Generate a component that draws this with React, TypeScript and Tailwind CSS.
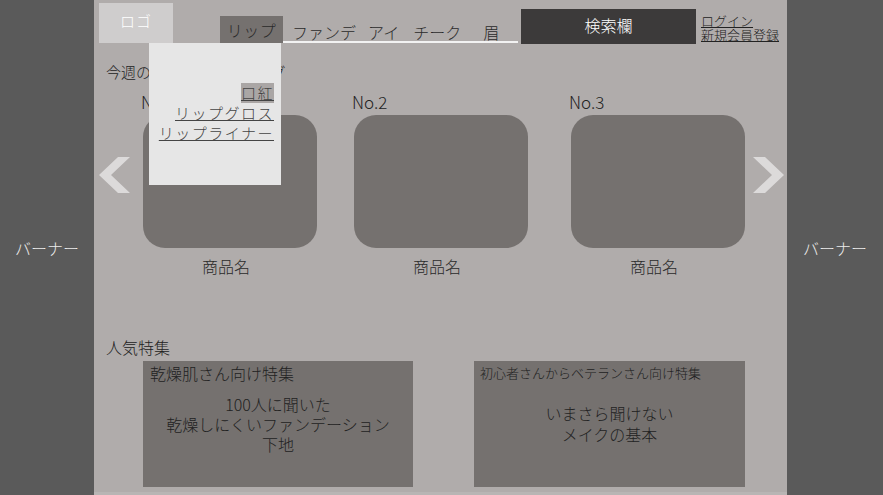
import React from "react";

const Arrow = ({ dir }: { dir: "left" | "right" }) => (
  <svg width="32" height="36" viewBox="0 0 32 36" className="block">
    {dir === "left" ? (
      <polygon points="19,0 31,0 12,18 31,36 19,36 0,18" fill="#dcdada" />
    ) : (
      <polygon points="1,0 13,0 32,18 13,36 1,36 20,18" fill="#dcdada" />
    )}
  </svg>
);

const Product = ({ no, className }: { no: string; className?: string }) => (
  <div className={`flex w-[176px] flex-col ${className ?? ""}`}>
    <div className="h-[20px] text-[17px] leading-[20px] text-[#222]">{no}</div>
    <div className="ml-[2px] mt-[3px] h-[133px] w-[174px] rounded-[22px] bg-[#75716f]" />
    <div className="-ml-[2px] mt-[8px] w-[174px] text-center text-[16px] leading-[20px] text-[#2a2a2a]">
      商品名
    </div>
  </div>
);

export default function App() {
  return (
    <div className="flex h-[495px] w-[883px] overflow-hidden font-light font-['Noto_Sans_CJK_JP','Noto_Sans',sans-serif]">
      <aside className="flex h-full w-[94px] items-center justify-center bg-[#5a5a5a] text-[16px] text-[#ececec]">
        バーナー
      </aside>

      <main className="relative flex h-full w-[693px] flex-col border-b-[3px] border-[#b8b5b4] bg-[#b0acab]">
        {/* header */}
        <header className="flex h-[45px] items-start">
          <div className="ml-[5px] mt-[3px] flex h-[40px] w-[74px] items-center justify-center bg-[#cfcdcd] pb-[4px] text-[15px] tracking-[1px] text-white">
            ロゴ
          </div>
          <nav className="ml-[47px] mt-[16px] flex h-[27px]">
            <div className="flex w-[63px] items-center justify-center bg-[#75716f] text-[16px] tracking-[0.5px] text-[#2a2a2a]">
              リップ
            </div>
            <div className="flex w-[235px] items-end border-b-2 border-[#f2f2f2] pb-[1px] text-[16px] leading-none text-[#2a2a2a]">
              <span className="ml-[9px]">ファンデ</span>
              <span className="ml-[12px]">アイ</span>
              <span className="ml-[14px]">チーク</span>
              <span className="ml-[22px]">眉</span>
            </div>
          </nav>
          <div className="ml-[3px] mt-[9px] flex h-[35px] w-[175px] items-center justify-center bg-[#3c3a3a] pb-[4px] text-[16px] text-white">
            検索欄
          </div>
          <div className="ml-[5px] mt-[14px] flex flex-col items-start text-[13px] leading-[14px] text-[#222]">
            <a className="underline">ログイン</a>
            <a className="underline">新規会員登録</a>
          </div>
        </header>

        {/* ranking */}
        <h2 className="ml-[12px] mt-[17px] text-[15px] leading-[20px] text-[#222]">
          今週のおすすめランキング
        </h2>

        <div className="mt-[10px] flex items-start">
          <div className="ml-[5px] mt-[65px]">
            <Arrow dir="left" />
          </div>
          <Product no="No.1" className="ml-[10px]" />
          <Product no="No.2" className="ml-[35px]" />
          <Product no="No.3" className="ml-[41px]" />
          <div className="ml-[7px] mt-[65px]">
            <Arrow dir="right" />
          </div>
        </div>

        {/* features */}
        <h2 className="ml-[12px] mt-[61px] text-[16px] leading-[20px] text-[#222]">人気特集</h2>
        <div className="mt-[4px] flex">
          <div className="ml-[49px] flex h-[126px] w-[270px] flex-col bg-[#75716f] pt-[2px] text-[#222]">
            <div className="pl-[7px] text-[16px] leading-[20px]">乾燥肌さん向け特集</div>
            <div className="mt-[11px] text-center text-[16px] leading-[20px]">
              100人に聞いた
              <br />
              乾燥しにくいファンデーション
              <br />
              下地
            </div>
          </div>
          <div className="ml-[61px] flex h-[126px] w-[271px] flex-col bg-[#75716f] pt-[4px] text-[#222]">
            <div className="pl-[6px] text-[13px] leading-[16px]">初心者さんからベテランさん向け特集</div>
            <div className="mt-[22px] text-center text-[16px] leading-[21px]">
              いまさら聞けない
              <br />
              メイクの基本
            </div>
          </div>
        </div>

        {/* dropdown */}
        <div className="absolute left-[55px] top-[43px] flex h-[142px] w-[132px] flex-col items-end bg-[#e6e6e6] pr-[7px] pt-[40px] text-[15px] leading-[20px] tracking-[1.5px] text-[#444]">
          <a className="bg-[#aaa6a5] underline decoration-[#444]">口紅</a>
          <a className="underline decoration-[#444]">リップグロス</a>
          <a className="underline decoration-[#444]">リップライナー</a>
        </div>
      </main>

      <aside className="flex h-full w-[96px] items-center justify-center bg-[#5a5a5a] text-[16px] text-[#ececec]">
        バーナー
      </aside>
    </div>
  );
}
